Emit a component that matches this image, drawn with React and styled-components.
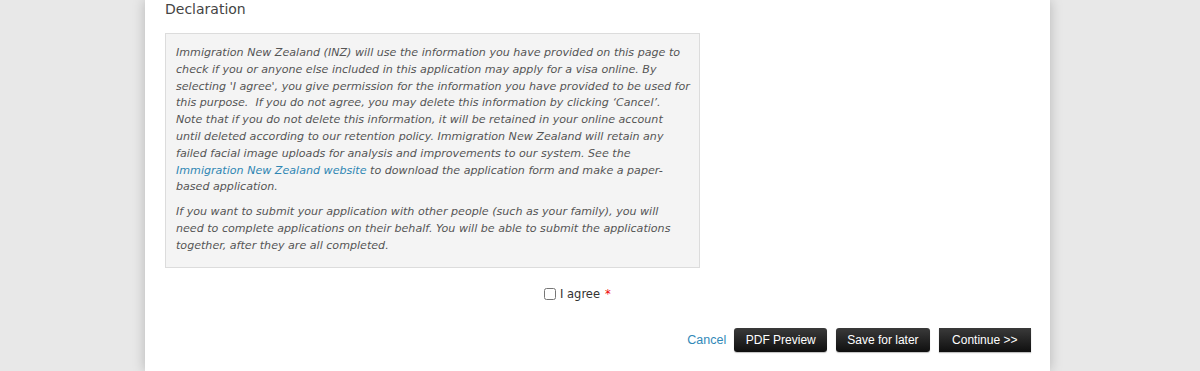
import React from 'react';
import styled, { createGlobalStyle } from 'styled-components';

const GlobalStyle = createGlobalStyle`
  * { box-sizing: border-box; }
  html, body { margin: 0; padding: 0; background: #e8e8e8; }
  body { font-family: 'DejaVu Sans', Verdana, sans-serif; color: #333; overflow: hidden; }
`;

const Page = styled.div`
  width: 905px; margin-left: 145px; min-height: 371px; background: #fff;
  box-shadow: 0 0 12px rgba(0,0,0,.22);
  padding: 0 19px 0 20px;
`;
const Heading = styled.h2`
  margin: 0; height: 33px;
  font-size: 14px; font-weight: normal; line-height: 18px; color: #444;
`;
const Notice = styled.div`
  width: 535px; background: #f4f4f4; border: 1px solid #dcdcdc;
  padding: 11px 8px 12px 10px;
`;
// the lines are broken where the original page breaks them
const Para = styled.p`
  margin: 0 0 8px; font-size: 11.1px; font-style: italic; line-height: 16.8px; color: #555;
  white-space: nowrap;
  &:last-child { margin-bottom: 0; }
`;
const Link = styled.a`color: #2f86b3; text-decoration: none;`;

const AgreeRow = styled.div`
  display: flex; align-items: center; gap: 3px; padding: 16px 0 0 379px; height: 37px;
  font-size: 11.5px; color: #333;
`;
const Box = styled.input`margin: 0 1px 0 0; width: 12px; height: 12px;`;
const Required = styled.span`color: #e00; margin-left: 2px;`;

const Actions = styled.div`
  display: flex; justify-content: flex-end; align-items: center; gap: 9px;
  padding-top: 23px;
`;
const CancelLink = styled.a`
  font-family: 'Liberation Sans', Arial, sans-serif; font-size: 12.5px; color: #3189b8;
  text-decoration: none; margin-right: -1px;
`;
const Button = styled.button`
  height: 24px; padding: 0 ${p => p.$pad || 11}px; border: 0;
  border-radius: ${p => (p.$square ? 0 : 3)}px;
  background: linear-gradient(#3a3a3a, #0f0f0f);
  box-shadow: 0 1px 1px rgba(0,0,0,.25);
  color: #fff; font-family: 'Liberation Sans', Arial, sans-serif; font-size: 12px;
  cursor: pointer;
`;

export default function App() {
  return (
    <>
      <GlobalStyle />
      <Page>
        <Heading>Declaration</Heading>
        <Notice>
          <Para>
            Immigration New Zealand (INZ) will use the information you have provided on this page to<br />
            check if you or anyone else included in this application may apply for a visa online. By<br />
            selecting 'I agree', you give permission for the information you have provided to be used for<br />
            this purpose.&nbsp; If you do not agree, you may delete this information by clicking ‘Cancel’.<br />
            Note that if you do not delete this information, it will be retained in your online account<br />
            until deleted according to our retention policy. Immigration New Zealand will retain any<br />
            failed facial image uploads for analysis and improvements to our system. See the<br />
            <Link href="#">Immigration New Zealand website</Link> to download the application form and make a paper-<br />
            based application.
          </Para>
          <Para>
            If you want to submit your application with other people (such as your family), you will<br />
            need to complete applications on their behalf. You will be able to submit the applications<br />
            together, after they are all completed.
          </Para>
        </Notice>
        <AgreeRow>
          <Box type="checkbox" id="agree" />
          <label htmlFor="agree">I agree</label>
          <Required>*</Required>
        </AgreeRow>
        <Actions>
          <CancelLink href="#">Cancel</CancelLink>
          <Button $pad={11.5}>PDF Preview</Button>
          <Button $pad={11}>Save for later</Button>
          <Button $square $pad={13.5}>Continue &gt;&gt;</Button>
        </Actions>
      </Page>
    </>
  );
}
